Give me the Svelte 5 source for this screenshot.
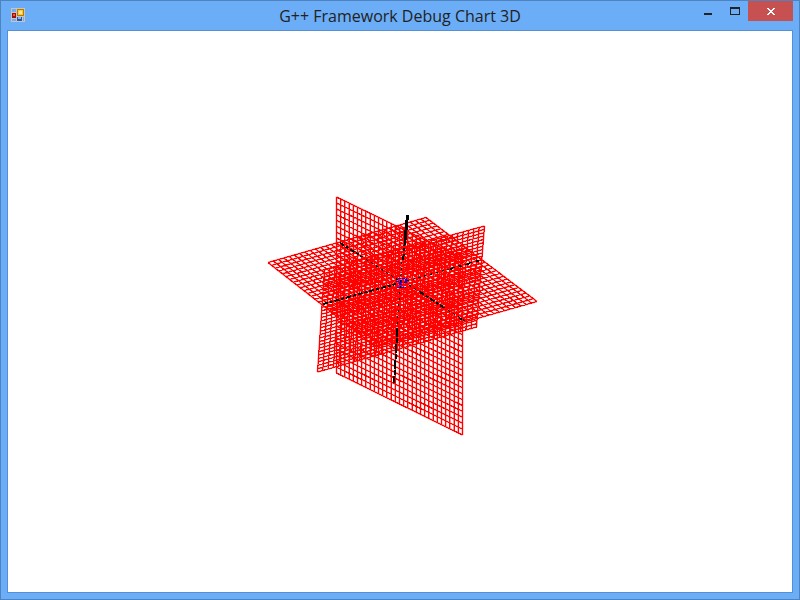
<script>
  const planes = [
    { a: [336.5, 197], b: [462.5, 258], c: [462.5, 435], d: [336.5, 373] },
    { a: [268, 262.5], b: [426, 217.5], c: [537, 301.5], d: [376, 347] },
    { a: [484.5, 226], b: [476.5, 327], c: [317.5, 372], d: [324.5, 270] }
  ];
  const cells = 30;
  const mix = (p, q, t) => [p[0] + (q[0] - p[0]) * t, p[1] + (q[1] - p[1]) * t];
  const grids = planes.map(({ a, b, c, d }) => {
    let path = '';
    for (let i = 0; i <= cells; i++) {
      const t = i / cells;
      path += `M${mix(a, b, t)}L${mix(d, c, t)}M${mix(a, d, t)}L${mix(b, c, t)}`;
    }
    return path;
  });
</script>

<main class="window">
  <header>
    <svg class="app" width="14" height="14" viewBox="0 0 14 14" shape-rendering="crispEdges" aria-hidden="true">
      <path fill="#c9c5bd" d="M0 0h14v14H0z" />
      <path fill="#6badf6" d="M1 1h4v3H1zM1 11h4v2H1zM12 9h1v4h-1z" />
      <path fill="#9d1010" d="M1 5h4v5H1z" />
      <path fill="#f0563c" d="M2 6h2v2H2z" />
      <path fill="#b57c05" d="M6 1h7v7H6z" />
      <path fill="#ffc62d" d="M7 2h5v5H7z" />
      <path fill="#ffe89a" d="M8 3h3v3H8z" />
      <path fill="#2854b4" d="M6 9h5v4H6z" />
      <path fill="#80b2f5" d="M7 9h3v2H7z" />
    </svg>
    <h1>G++ Framework Debug Chart 3D</h1>
    <div class="controls">
      <button aria-label="Minimize"><svg width="10" height="9" shape-rendering="crispEdges"><path fill="#222" d="M1 6h8v2H1z" /></svg></button>
      <button aria-label="Maximize"><svg width="10" height="9" shape-rendering="crispEdges"><path fill="#222" fill-rule="evenodd" d="M0 0h10v8H0zM1 2v5h8V2z" /></svg></button>
      <button class="close" aria-label="Close"><svg width="8" height="7" shape-rendering="crispEdges"><path fill="#fff" d="M0 0h2v1h1v1h2V1h1V0h2v1H7v1H6v1H5v1h1v1h1v1h1v1H6V6H5V5H3v1H2v1H0V6h1V5h1V4h1V3H2V2H1V1H0z" /></svg></button>
    </div>
  </header>
  <section>
    <svg class="chart" viewBox="8 31 784 561" role="img" aria-label="3D chart with three grid planes">
      <g fill="none" stroke="#f00">
        {#each grids as grid}
          <path stroke-width="1.6" stroke-opacity=".6" d={grid} />
          <path shape-rendering="crispEdges" d={grid} />
        {/each}
      </g>
      <g fill="none" shape-rendering="crispEdges">
        <g stroke="#000">
          <path stroke-width="3" d="M407.500 215L405 240" />
          <path stroke-width="2" stroke-dasharray="6 2 3 3" d="M405 240L403 262" />
          <path stroke-width="2" stroke-dasharray="9 1 5 1" d="M397.500 328L394 383" />
          <path stroke-width="2" stroke-dasharray="5 2 3 2" d="M323 304L396 284M340 243L361 256M420 292L443 307" />
          <path stroke-dasharray="2 4" d="M361 256L398 280M404 282L420 292M443 307L465 321M407 281L477 261M402 262L397 328" />
          <path stroke-width="2" stroke-dasharray="3 6" d="M450 269L481 260M459 318L466 322" />
        </g>
        <path stroke="#00f" stroke-dasharray="3 1" d="M398 278h9M397 287h9M401 280v5M396 281h3" />
        <path stroke="#00f" stroke-width="2" d="M406 279v4M400 282v3" />
      </g>
    </svg>
  </section>
</main>

<style>
  :global(body) {
    margin: 0;
  }
  .window {
    box-sizing: border-box;
    display: flex;
    flex-direction: column;
    height: 100vh;
    padding: 0 6px 6px;
    border: 1px solid #4f83bd;
    background: #6badf6;
  }
  header {
    display: grid;
    grid-template-columns: 1fr auto 1fr;
    align-items: start;
    height: 29px;
  }
  .app {
    margin: 7px 0 0 4px;
  }
  h1 {
    margin: 0;
    color: #222;
    font-family: "Open Sans", "Noto Sans", sans-serif;
    font-size: 16px;
    font-weight: 400;
    line-height: 30px;
    white-space: nowrap;
  }
  .controls {
    display: flex;
    justify-content: flex-end;
  }
  button {
    display: flex;
    align-items: center;
    justify-content: center;
    width: 27px;
    height: 20px;
    padding: 0;
    border: 0;
    background: none;
  }
  .close {
    width: 45px;
    background: #c75050;
  }
  section {
    flex: 1;
    min-height: 0;
    border: 1px solid #5690d3;
    background: #fff;
  }
  .chart {
    display: block;
    width: 100%;
    height: 100%;
  }
</style>
